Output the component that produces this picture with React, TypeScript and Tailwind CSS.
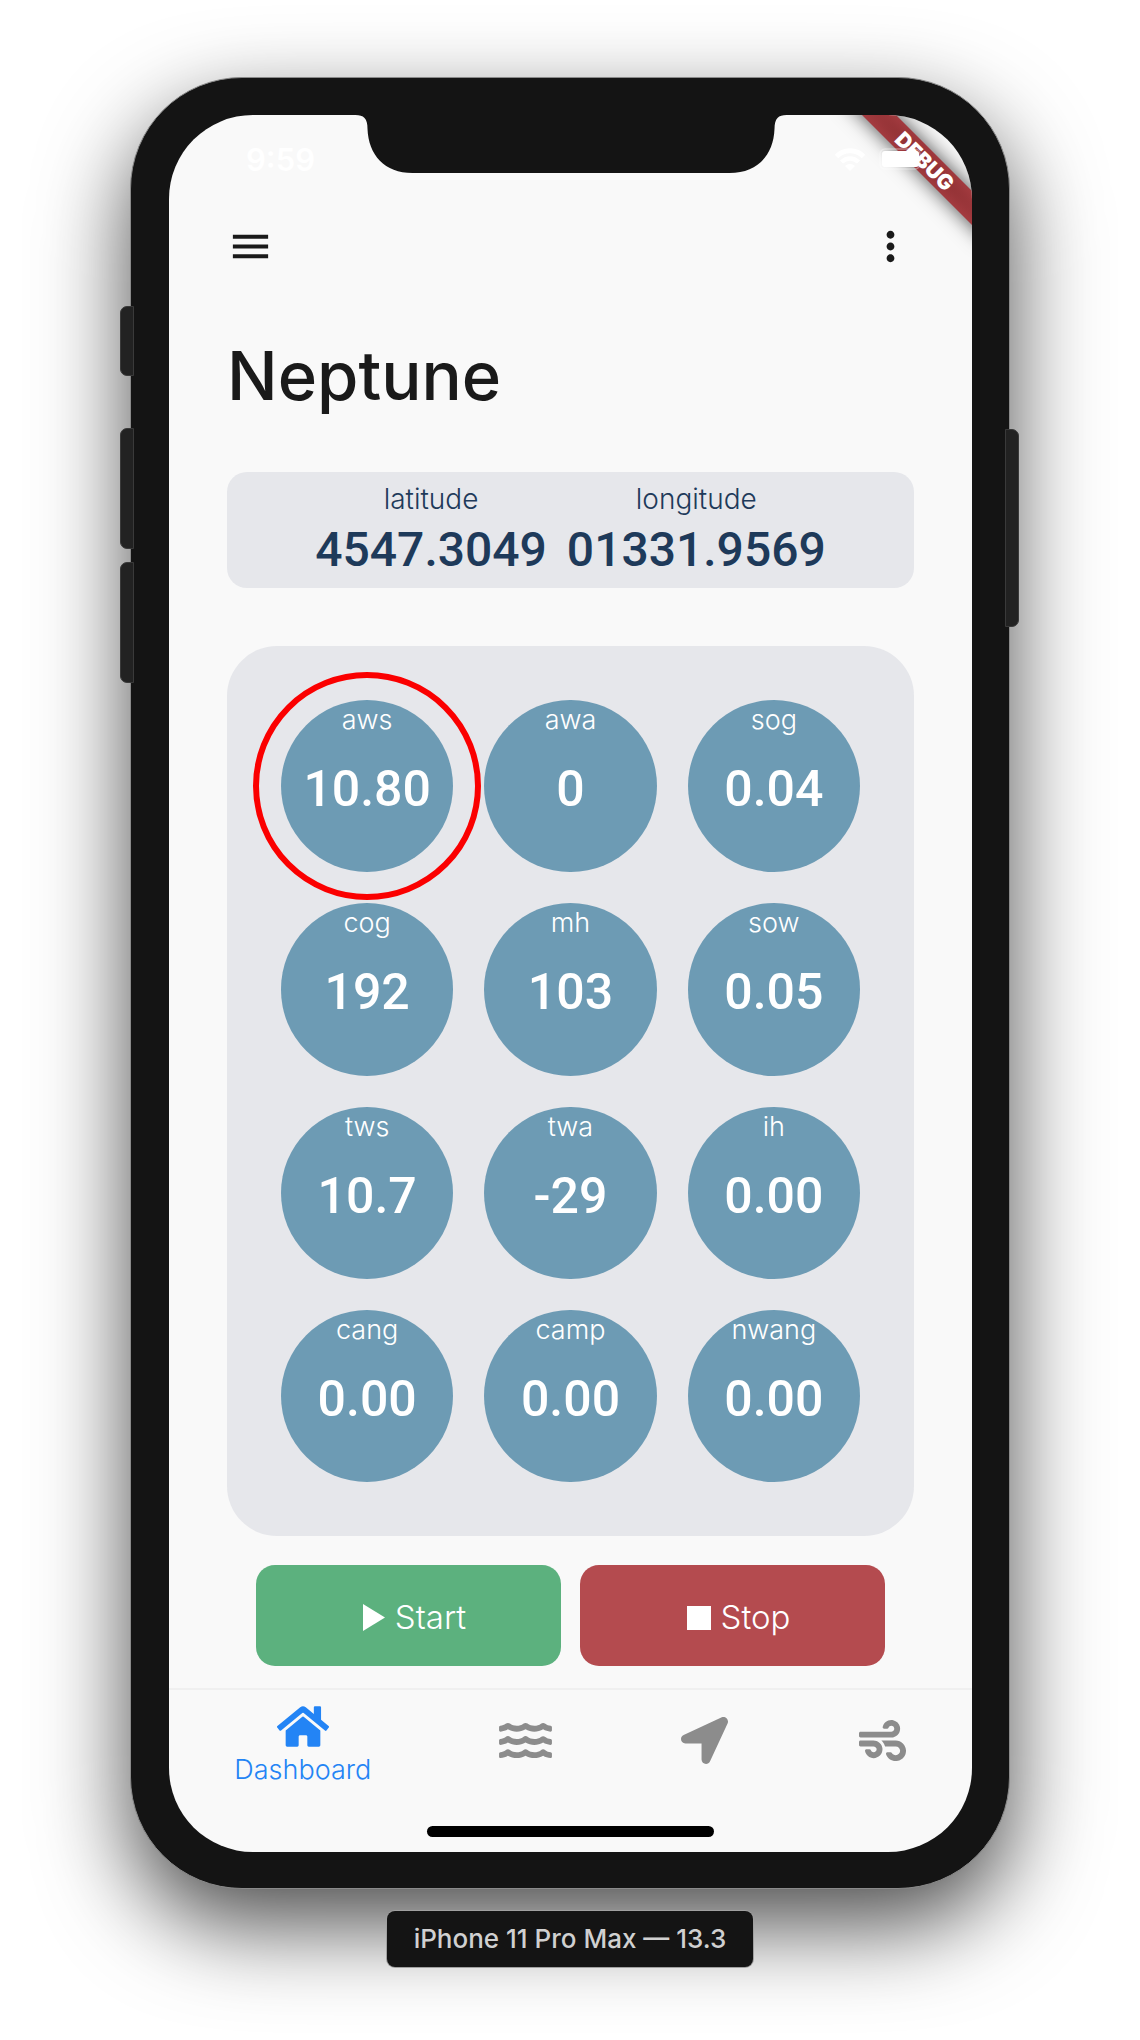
import type { ReactNode } from "react";
import { FaHome, FaLocationArrow, FaWater, FaWind } from "react-icons/fa";
import { MdMenu, MdMoreVert } from "react-icons/md";

type Reading = { label: string; value: string; highlighted?: boolean };

const readings: Reading[] = [
  { label: "aws", value: "10.80", highlighted: true },
  { label: "awa", value: "0" },
  { label: "sog", value: "0.04" },
  { label: "cog", value: "192" },
  { label: "mh", value: "103" },
  { label: "sow", value: "0.05" },
  { label: "tws", value: "10.7" },
  { label: "twa", value: "-29" },
  { label: "ih", value: "0.00" },
  { label: "cang", value: "0.00" },
  { label: "camp", value: "0.00" },
  { label: "nwang", value: "0.00" },
];

function Notch() {
  return (
    <svg
      className="absolute top-0 left-1/2 -translate-x-1/2"
      width="431"
      height="58"
      viewBox="0 0 431 58"
      fill="#141414"
      aria-hidden="true"
    >
      <path d="M0 0C8 0 12 3 12 14C13 40 29 58 57 58H374C402 58 418 40 419 14C419 3 423 0 431 0Z" />
    </svg>
  );
}

function StatusBar() {
  return (
    <div className="flex h-[88px] items-center justify-between pr-[47px] pl-[77px] text-white">
      <span className="text-[31px] leading-none font-semibold">9:59</span>
      <div className="relative z-10 flex items-center gap-[14px]">
        <svg width="30" height="23" viewBox="0 0 30 23" fill="none" stroke="currentColor" aria-hidden="true">
          <path d="M1.500 8.500C9 0.800 21 0.800 28.500 8.500" strokeWidth="5" />
          <path d="M6.500 14C11.500 9.200 18.500 9.200 23.500 14" strokeWidth="4.500" />
          <path d="M10 18C13 15.300 17 15.300 20 18L15 23Z" fill="currentColor" stroke="none" />
        </svg>
        <svg width="46" height="22" viewBox="0 0 46 22" fill="none" aria-hidden="true">
          <rect x="1" y="1" width="40" height="20" rx="5" stroke="white" strokeOpacity="0.35" strokeWidth="1.500" />
          <rect x="3" y="3" width="37" height="16" rx="3" fill="white" />
          <path d="M43 7.500C45.500 8.500 45.500 13.500 43 14.500Z" fill="white" fillOpacity="0.4" />
        </svg>
      </div>
    </div>
  );
}

function Gauge({ label, value, highlighted }: Reading) {
  return (
    <div className="relative flex aspect-square flex-col items-center rounded-full bg-[#6d9bb4] pt-1 text-white">
      {highlighted && <span className="absolute -inset-[28px] rounded-full border-[6px] border-[#fb0000]" />}
      <span className="text-[27px] leading-[32px] font-light">{label}</span>
      <span className="mt-[23px] font-[Roboto,sans-serif] text-[50px] leading-[60px] font-medium">{value}</span>
    </div>
  );
}

function Coordinate({ label, value }: { label: string; value: string }) {
  return (
    <div className="flex flex-col items-center">
      <span className="text-[28px] leading-[34px] font-light">{label}</span>
      <span className="mt-1 font-[Roboto,sans-serif] text-[48px] leading-[60px] font-medium">{value}</span>
    </div>
  );
}

function NavItem({ label, caption, children }: { label: string; caption?: boolean; children: ReactNode }) {
  return (
    <button
      type="button"
      aria-label={label}
      className={
        caption
          ? "flex flex-[3] flex-col items-center pt-[13px] text-[#2384f5]"
          : "flex h-[100px] flex-[2] items-center justify-center text-[#8c8c8c]"
      }
    >
      {children}
      {caption && <span className="text-[27px] leading-[40px] font-light">{label}</span>}
    </button>
  );
}

function SideKey({ className }: { className: string }) {
  return <span className={"absolute w-[14px] border border-[#3a3a3a] bg-[#222222] " + className} />;
}

export default function App() {
  return (
    <main className="flex min-h-screen flex-col items-center overflow-hidden bg-white px-4 pt-[77px] pb-[70px] font-[Inter,sans-serif]">
      <div className="relative w-full max-w-[880px] rounded-[112px] border border-[#8a8a8a] bg-[#141414] pt-[37px] pr-[37px] pb-[36px] pl-[38px] shadow-[0_36px_90px_rgba(0,0,0,0.7)]">
        <SideKey className="top-[228px] -left-[11px] h-[70px] rounded-l-[7px]" />
        <SideKey className="top-[350px] -left-[11px] h-[121px] rounded-l-[7px]" />
        <SideKey className="top-[484px] -left-[11px] h-[121px] rounded-l-[7px]" />
        <SideKey className="top-[351px] -right-[10px] h-[198px] rounded-r-[7px]" />

        <div className="relative overflow-hidden rounded-[84px] bg-[#f9f9f9]">
          <Notch />
          <div className="absolute top-[34px] -right-[53px] flex h-[24px] w-[200px] rotate-45 items-center justify-center bg-radial-[ellipse_at_center] from-[#8f3033] to-[#a83d42] text-[21px] leading-none font-black text-white shadow-[0_0_20px_rgba(0,0,0,0.7)]">
            DEBUG
          </div>
          <StatusBar />

          <div className="px-[58px]">
            <header>
              <div className="mt-[20px] flex items-center justify-between text-[#1a1a1a]">
                <button type="button" aria-label="Open menu">
                  <MdMenu size={47} />
                </button>
                <button type="button" aria-label="More options">
                  <MdMoreVert size={47} />
                </button>
              </div>
              <h1 className="mt-[66px] text-[67px] leading-[80px] font-medium text-[#1a1a1a]">Neptune</h1>
            </header>

            <section className="mt-[56px] flex h-[116px] justify-center gap-5 rounded-[20px] bg-[#e6e7eb] pt-[10px] text-[#1e3a5a]">
              <Coordinate label="latitude" value="4547.3049" />
              <Coordinate label="longitude" value="01331.9569" />
            </section>

            <section className="mt-[58px] grid grid-cols-3 gap-[31px] rounded-[50px] bg-[#e6e7eb] p-[54px]">
              {readings.map((reading) => (
                <Gauge key={reading.label} {...reading} />
              ))}
            </section>

            <div className="mt-[29px] flex gap-[19px] px-[29px] text-[33px] font-light text-white">
              <button
                type="button"
                className="flex h-[101px] flex-1 items-center justify-center gap-[10px] rounded-[19px] bg-[#5cb17e] pt-1 pl-3"
              >
                <svg width="22" height="27" viewBox="0 0 22 27" fill="currentColor" aria-hidden="true">
                  <path d="M0 0L22 13.500L0 27Z" />
                </svg>
                Start
              </button>
              <button
                type="button"
                className="flex h-[101px] flex-1 items-center justify-center gap-[10px] rounded-[19px] bg-[#b44b4f] pt-1 pl-3"
              >
                <span className="size-6 bg-white" />
                Stop
              </button>
            </div>
          </div>

          <nav className="mt-[22px] flex items-start border-t-2 border-[#f0f0f0]">
            <NavItem label="Dashboard" caption>
              <FaHome className="h-[47px] w-[52px]" />
            </NavItem>
            <NavItem label="Water">
              <FaWater className="h-[47px] w-[53px]" />
            </NavItem>
            <NavItem label="Course">
              <FaLocationArrow className="size-[47px]" />
            </NavItem>
            <NavItem label="Wind">
              <FaWind className="size-[47px]" />
            </NavItem>
          </nav>
          <div className="mx-auto mt-[36px] mb-[15px] h-[11px] w-[287px] rounded-full bg-black" />
        </div>
      </div>

      <p className="relative mt-[22px] rounded-[8px] bg-[#141414] px-[27px] py-[12px] text-[26px] leading-[32px] font-medium text-[#d0d0d0] shadow-[0_0_0_1px_#a0a0a0]">
        iPhone 11 Pro Max — 13.3
      </p>
    </main>
  );
}
